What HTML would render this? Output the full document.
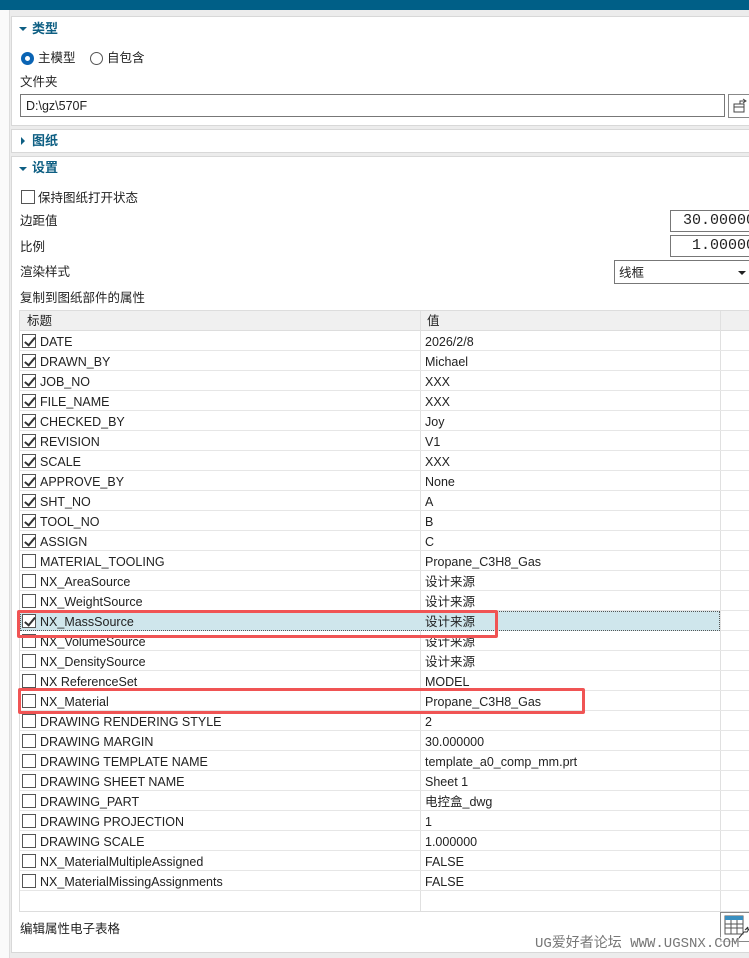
<!DOCTYPE html>
<html><head><meta charset="utf-8"><style>
*{margin:0;padding:0;box-sizing:border-box}
body{width:749px;height:958px;overflow:hidden;background:#ececec;font-family:"Liberation Sans","Noto Sans CJK SC",sans-serif;font-size:12.5px;line-height:14px;color:#222;position:relative}
.a{position:absolute;line-height:14px}
.sec{position:absolute;left:11px;right:0;background:#fff;border:1px solid #d8d8d8;border-right:none}
.hd{position:absolute;left:20px;font-weight:bold;color:#0e5f83;font-size:13px}
.tri{position:absolute;width:0;height:0}
.cb{position:absolute;width:14px;height:14px;border:1px solid #555;background:#fff}
.cb.c::after{content:"";position:absolute;left:4px;top:0px;width:4px;height:9px;border:solid #333;border-width:0 2px 2px 0;transform:rotate(40deg)}
.row{position:absolute;left:20px;width:729px;height:20px;border-bottom:1px solid #e6e6e6}
</style></head><body>
<div class="a" style="left:0;top:0;width:749px;height:10px;background:#005f87"></div>
<div class="a" style="left:0;top:10px;width:10px;height:948px;background:#fafafa;border-right:1px solid #ddd"></div>

<div class="sec" style="top:16px;height:110px">
 <div class="tri" style="left:7px;top:10px;border-left:4px solid transparent;border-right:4px solid transparent;border-top:4px solid #0e5f83"></div>
 <div class="hd" style="top:5px">类型</div>
 <div class="a" style="left:9px;top:35px;width:13px;height:13px;border-radius:50%;border:4px solid #0a64b4"></div>
 <div class="a" style="left:26px;top:34px">主模型</div>
 <div class="a" style="left:78px;top:35px;width:13px;height:13px;border-radius:50%;border:1px solid #555"></div>
 <div class="a" style="left:95px;top:34px">自包含</div>
 <div class="a" style="left:8px;top:58px">文件夹</div>
 <div class="a" style="left:8px;top:77px;width:705px;height:23px;border:1px solid #777;padding:4px 5px">D:\gz\570F</div>
 <div class="a" style="left:716px;top:77px;width:30px;height:24px;border:1px solid #888"></div>
 <svg class="a" style="left:720px;top:80px" width="20" height="18"><path d="M2 7h10v8H2zM2 10h10M8 7l0-3h5M11 2l3 2-3 2" fill="none" stroke="#444"/></svg>
</div>

<div class="sec" style="top:129px;height:24px">
 <div class="tri" style="left:9px;top:7px;border-top:4px solid transparent;border-bottom:4px solid transparent;border-left:4px solid #0e5f83"></div>
 <div class="hd" style="top:4px">图纸</div>
</div>

<div class="sec" style="top:156px;height:797px">
 <div class="tri" style="left:7px;top:10px;border-left:4px solid transparent;border-right:4px solid transparent;border-top:4px solid #0e5f83"></div>
 <div class="hd" style="top:4px">设置</div>
 <div class="cb" style="left:9px;top:33px"></div>
 <div class="a" style="left:26px;top:34px">保持图纸打开状态</div>
 <div class="a" style="left:8px;top:57px">边距值</div>
 <div class="a" style="left:658px;top:53px;width:80px;height:22px;border:1px solid #777;font-family:'Liberation Mono',monospace;font-size:15px;padding:3px 0 0 12px">30.00000</div>
 <div class="a" style="left:8px;top:83px">比例</div>
 <div class="a" style="left:658px;top:78px;width:80px;height:22px;border:1px solid #777;font-family:'Liberation Mono',monospace;font-size:15px;padding:3px 0 0 21px">1.00000</div>
 <div class="a" style="left:8px;top:108px">渲染样式</div>
 <div class="a" style="left:602px;top:103px;width:140px;height:24px;border:1px solid #777;padding:5px 0 0 4px">线框</div>
 <div class="tri" style="left:726px;top:114px;border-left:4px solid transparent;border-right:4px solid transparent;border-top:4px solid #222"></div>
 <div class="a" style="left:8px;top:134px">复制到图纸部件的属性</div>
 <div class="a" style="left:8px;top:765px">编辑属性电子表格</div>
 <div class="a" style="left:708px;top:755px;width:30px;height:30px;border:1px solid #888"></div>
 <svg class="a" style="left:712px;top:758px" width="26" height="26"><rect x="1" y="1" width="18" height="18" fill="#fff" stroke="#555"/><rect x="1" y="1" width="18" height="4" fill="#3a8fc0"/><path d="M1 9h18M1 13h18M7 5v14M13 5v14" stroke="#555" fill="none"/><path d="M14 24l6-7 3 0 2-3-2 0 1-2-3 3" stroke="#333" fill="#fff"/></svg>
</div>

<div class="a" style="left:19px;top:310px;width:730px;height:602px;border:1px solid #ddd;border-right:none;background:#fff"></div>
<div class="a" style="left:20px;top:311px;width:729px;height:20px;background:#f0f0f0;border-bottom:1px solid #ddd"><span class="a" style="left:7px;top:3px">标题</span><span class="a" style="left:407px;top:3px">值</span></div>
<div class="a" style="left:420px;top:311px;width:1px;height:600px;background:#e0e0e0"></div>
<div class="a" style="left:720px;top:311px;width:1px;height:600px;background:#e0e0e0"></div>
<div id="rows"></div>
<div class="a" style="left:20px;top:611px;width:700px;height:20px;background:#cfe6ec;border:1px dotted #555"></div>

<script>
var d=[["DATE","2026/2/8",1],["DRAWN_BY","Michael",1],["JOB_NO","XXX",1],["FILE_NAME","XXX",1],["CHECKED_BY","Joy",1],["REVISION","V1",1],["SCALE","XXX",1],["APPROVE_BY","None",1],["SHT_NO","A",1],["TOOL_NO","B",1],["ASSIGN","C",1],["MATERIAL_TOOLING","Propane_C3H8_Gas",0],["NX_AreaSource","设计来源",0],["NX_WeightSource","设计来源",0],["NX_MassSource","设计来源",1],["NX_VolumeSource","设计来源",0],["NX_DensitySource","设计来源",0],["NX ReferenceSet","MODEL",0],["NX_Material","Propane_C3H8_Gas",0],["DRAWING RENDERING STYLE","2",0],["DRAWING MARGIN","30.000000",0],["DRAWING TEMPLATE NAME","template_a0_comp_mm.prt",0],["DRAWING SHEET NAME","Sheet 1",0],["DRAWING_PART","电控盒_dwg",0],["DRAWING PROJECTION","1",0],["DRAWING SCALE","1.000000",0],["NX_MaterialMultipleAssigned","FALSE",0],["NX_MaterialMissingAssignments","FALSE",0]];
var h="";d.forEach(function(r,i){var t=331+20*i;
h+='<div class="row" style="top:'+t+'px"></div>';
h+='<div class="cb'+(r[2]?' c':'')+'" style="left:22px;top:'+(t+3)+'px;z-index:3"></div>';
h+='<div class="a" style="left:40px;top:'+(t+4)+'px;z-index:3">'+r[0]+'</div>';
h+='<div class="a" style="left:425px;top:'+(t+4)+'px;z-index:3">'+r[1]+'</div>';});
document.getElementById("rows").innerHTML=h;
</script>
<div class="a" style="left:17px;top:610px;width:481px;height:28px;border:3px solid #f05454;border-radius:2px;z-index:5"></div>
<div class="a" style="left:18px;top:688px;width:567px;height:26px;border:3px solid #f05454;border-radius:2px;z-index:5"></div>
<div class="a" style="left:535px;top:937px;font-family:'Liberation Mono','Noto Sans CJK SC',monospace;font-size:14px;color:#777;z-index:6;background:rgba(255,255,255,.6)">UG爱好者论坛 WWW.UGSNX.COM</div>
</body></html>
